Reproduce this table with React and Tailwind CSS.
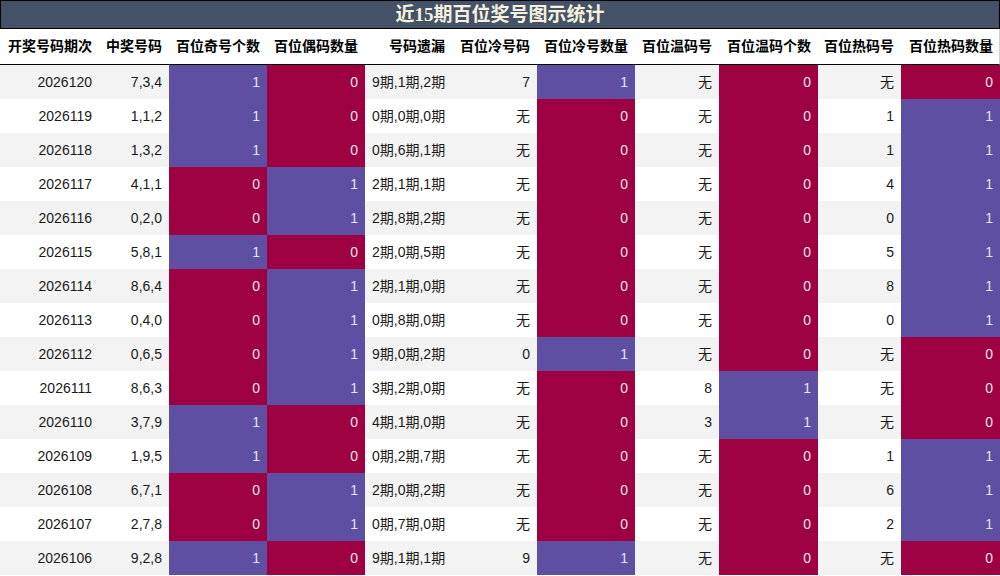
import React from 'react'

const rows = [
    ['2026120', '7,3,4', 1, 0, '9期,1期,2期', '7', 1, '无', 0, '无', 0],
    ['2026119', '1,1,2', 1, 0, '0期,0期,0期', '无', 0, '无', 0, '1', 1],
    ['2026118', '1,3,2', 1, 0, '0期,6期,1期', '无', 0, '无', 0, '1', 1],
    ['2026117', '4,1,1', 0, 1, '2期,1期,1期', '无', 0, '无', 0, '4', 1],
    ['2026116', '0,2,0', 0, 1, '2期,8期,2期', '无', 0, '无', 0, '0', 1],
    ['2026115', '5,8,1', 1, 0, '2期,0期,5期', '无', 0, '无', 0, '5', 1],
    ['2026114', '8,6,4', 0, 1, '2期,1期,0期', '无', 0, '无', 0, '8', 1],
    ['2026113', '0,4,0', 0, 1, '0期,8期,0期', '无', 0, '无', 0, '0', 1],
    ['2026112', '0,6,5', 0, 1, '9期,0期,2期', '0', 1, '无', 0, '无', 0],
    ['2026111', '8,6,3', 0, 1, '3期,2期,0期', '无', 0, '8', 1, '无', 0],
    ['2026110', '3,7,9', 1, 0, '4期,1期,0期', '无', 0, '3', 1, '无', 0],
    ['2026109', '1,9,5', 1, 0, '0期,2期,7期', '无', 0, '无', 0, '1', 1],
    ['2026108', '6,7,1', 0, 1, '2期,0期,2期', '无', 0, '无', 0, '6', 1],
    ['2026107', '2,7,8', 0, 1, '0期,7期,0期', '无', 0, '无', 0, '2', 1],
    ['2026106', '9,2,8', 1, 0, '9期,1期,1期', '9', 1, '无', 0, '无', 0],
]

const headers = ['开奖号码期次', '中奖号码', '百位奇号个数', '百位偶码数量', '号码遗漏', '百位冷号码', '百位冷号数量', '百位温码号', '百位温码个数', '百位热码号', '百位热码数量']

const colored = [2, 3, 6, 8, 10]

const grid = 'grid grid-cols-[99px_70px_98px_98px_87px_85px_98px_84px_99px_83px_99px] grid-rows-1'

function Cell({ value, col, stripe }) {
    if (colored.includes(col)) {
        return (
            <div className={`flex items-center justify-end pr-[7px] text-[#e4e4ec] ${value === 1 ? 'bg-[#5e4fa2]' : 'bg-[#9e0142]'}`}>
                {value}
            </div>
        )
    }
    return (
        <div className={`flex items-center whitespace-nowrap overflow-hidden text-[#1a1a1a] ${col === 4 ? 'justify-start pl-[7px]' : 'justify-end pr-[7px]'} ${stripe ? 'bg-[#f3f3f3]' : 'bg-white'}`}>
            {value}
        </div>
    )
}

export default function App() {
    return (
        <div className="w-[1000px] h-[576px] bg-white overflow-hidden" style={{ fontFamily: '"Liberation Sans", "Noto Sans CJK SC", sans-serif' }}>
            <div className="h-[29px] bg-[#435266] border border-black flex items-center justify-center">
                <span className="text-[19px] font-bold text-[#f6f1de] leading-none" style={{ fontFamily: '"Liberation Serif", "Noto Sans CJK SC", serif' }}>
                    近15期百位奖号图示统计
                </span>
            </div>
            <div className={`${grid} h-[36px] border-b border-black border-r border-r-[#d0d0d0]`}>
                {headers.map((h) => (
                    <div key={h} className="flex items-center justify-end pr-[7px] text-[14px] font-bold text-black whitespace-nowrap">
                        {h}
                    </div>
                ))}
            </div>
            {rows.map((r, i) => (
                <div key={r[0]} className={`${grid} h-[34px] text-[14px] leading-[20px]`}>
                    {r.map((v, c) => (
                        <Cell key={c} value={v} col={c} stripe={i % 2 === 0} />
                    ))}
                </div>
            ))}
        </div>
    )
}
